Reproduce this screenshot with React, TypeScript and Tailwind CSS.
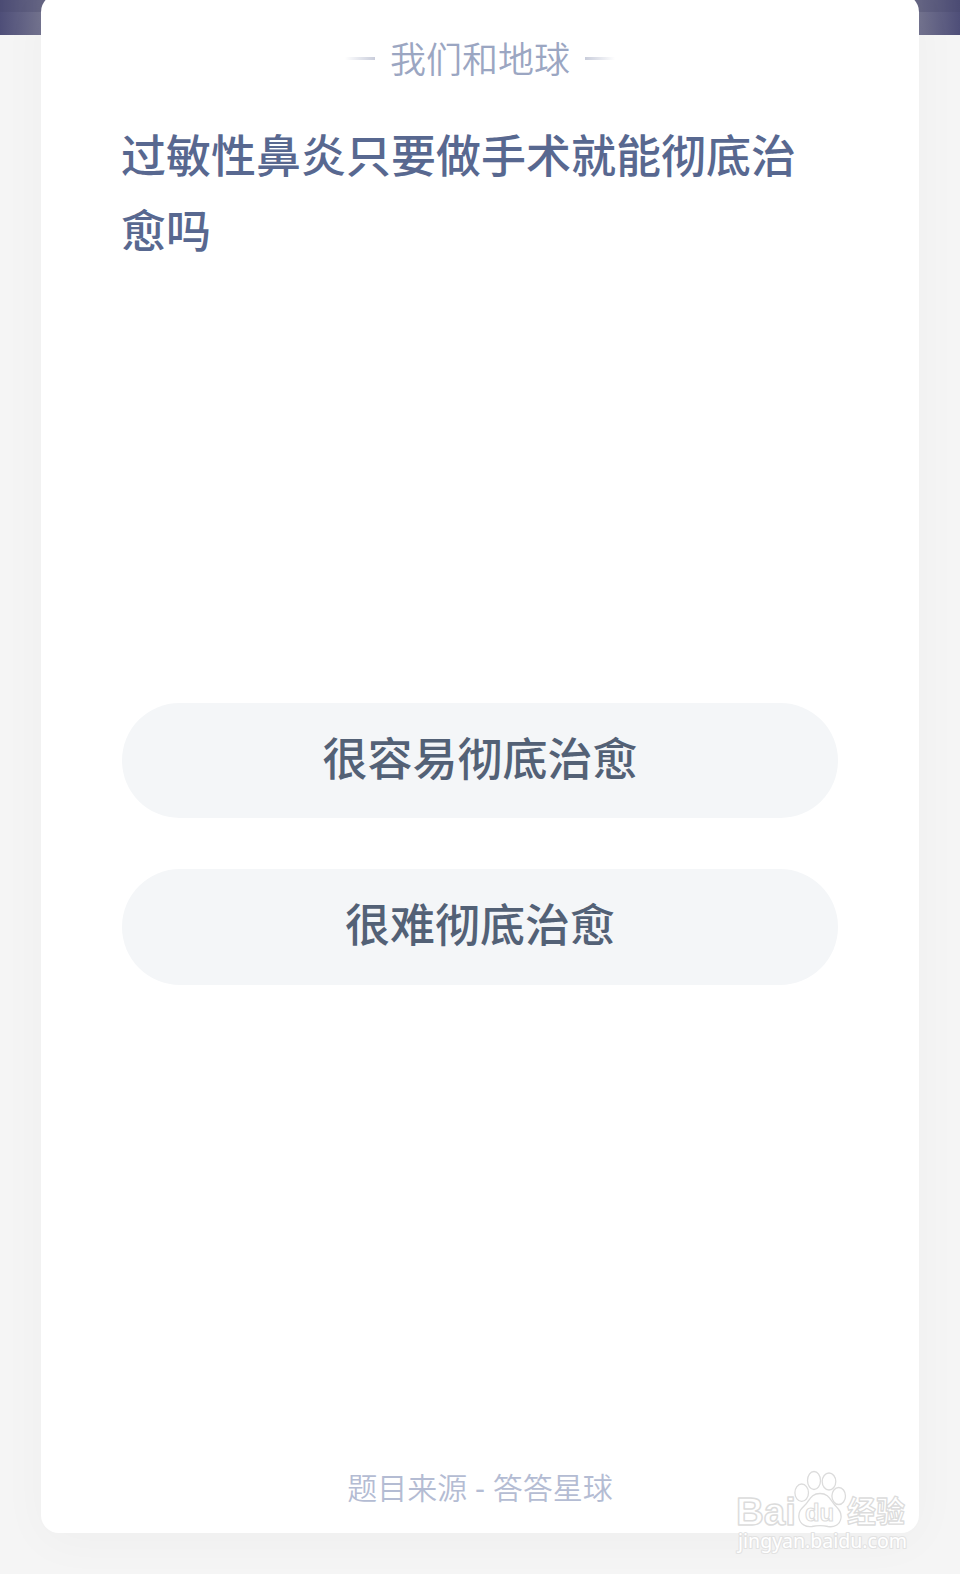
const answers = ["很容易彻底治愈", "很难彻底治愈"];

function Category({ name }: { name: string }) {
  return (
    <div className="flex h-9 items-center justify-center gap-[15px] text-[36px] leading-9 font-[350] text-[#9ba6c2]">
      <span className="mt-[3px] h-[3px] w-[30px] bg-linear-to-r from-white to-[#c9cddb]" />
      <span>{name}</span>
      <span className="mt-[3px] h-[3px] w-[30px] bg-linear-to-l from-white to-[#c9cddb]" />
    </div>
  );
}

function Answer({ label }: { label: string }) {
  return (
    <button className="flex h-[115.4px] w-full items-center justify-center rounded-full bg-[#f4f6f8] pb-2 text-[45px] leading-none font-medium text-[#536176]">
      {label}
    </button>
  );
}

function Watermark() {
  return (
    <svg
      className="pointer-events-none absolute top-[1468px] left-[732px]"
      width="184"
      height="90"
      viewBox="0 0 184 90"
      fill="#fff"
      stroke="#dcdcdc"
      strokeWidth="1.3"
      strokeLinejoin="round"
    >
      <text x="4" y="56.500" fontFamily="'Liberation Sans', sans-serif" fontSize="39" fontWeight="700" textLength="60" lengthAdjust="spacingAndGlyphs" strokeWidth="1.5">
        Bai
      </text>
      <text x="115" y="54" fontFamily="'Noto Sans CJK SC', sans-serif" fontSize="30" fontWeight="700" textLength="58" lengthAdjust="spacingAndGlyphs">
        经验
      </text>
      <ellipse cx="69.700" cy="24.700" rx="6.800" ry="8.700" />
      <ellipse cx="82" cy="12.500" rx="6.500" ry="9" />
      <ellipse cx="97" cy="13.500" rx="6.800" ry="8.500" />
      <ellipse cx="106.700" cy="28" rx="6.800" ry="8.500" />
      <path d="M88 25.500C80 25.500 78 31 74 36C70 40 66 43 67 50C68 56 74 59.500 80 58.500C84 57.500 92 57.500 96 58.500C102 59.500 108 57 109 50C110 43 105 40 102 36C98 31 96 25.500 88 25.500Z" />
      <text x="73" y="53" fontFamily="'Liberation Sans', sans-serif" fontSize="24" fontWeight="700" textLength="29" lengthAdjust="spacingAndGlyphs" strokeWidth="1.1">
        du
      </text>
      <text x="6" y="79.500" fontFamily="'Noto Sans', sans-serif" fontSize="19" textLength="169" lengthAdjust="spacingAndGlyphs" strokeWidth="2.2" stroke="#e2e2e2" paintOrder="stroke">
        jingyan.baidu.com
      </text>
    </svg>
  );
}

export default function App() {
  return (
    <div
      lang="zh-CN"
      className="relative h-[1574px] w-[960px] overflow-hidden bg-[#f5f5f5] font-['Noto_Sans_CJK_SC',sans-serif]"
    >
      <div className="h-[35px] bg-[linear-gradient(to_right,#4e4e78,#73738f_41px,#73738f_919px,#4e4e78)]">
        <div className="h-3 bg-[#45456b]/30" />
      </div>
      <main className="relative mx-[41px] -mt-[41px] flex h-[1539px] flex-col rounded-[18px] bg-white px-[81px] pt-[45px] shadow-[0_8px_50px_rgba(0,0,0,0.03)]">
        <Category name="我们和地球" />
        <h1 className="mt-[41px] -ml-px h-[587px] text-[45px] leading-[75px] font-medium text-[#586890]">
          过敏性鼻炎只要做手术就能彻底治愈吗
        </h1>
        <div className="flex flex-col gap-[50.8px]">
          {answers.map((label) => (
            <Answer key={label} label={label} />
          ))}
        </div>
        <p className="mt-auto pb-7 text-center text-[30px] leading-8 font-[350] text-[#b4bcd3] [word-spacing:1px]">
          题目来源 <span className="font-['Liberation_Sans',sans-serif]">-</span> 答答星球
        </p>
      </main>
      <Watermark />
    </div>
  );
}
